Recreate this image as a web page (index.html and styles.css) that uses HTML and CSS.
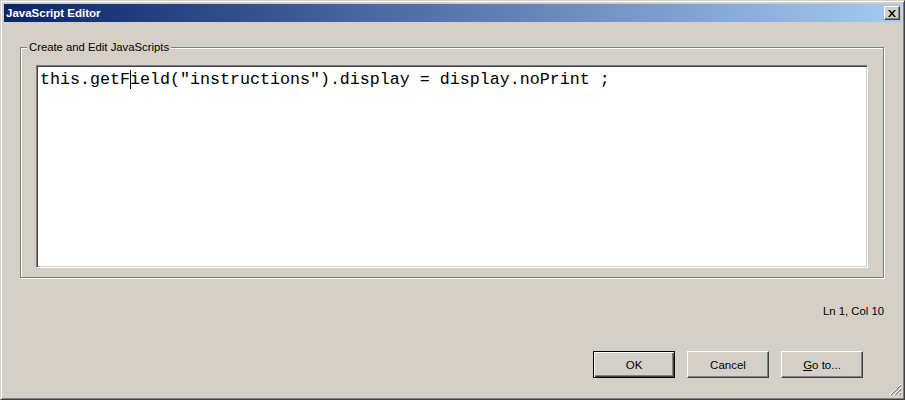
FILE: index.html
```html
<!DOCTYPE html>
<html lang="en">
<head>
    <meta charset="UTF-8">
    <title>JavaScript Editor</title>
    <link rel="stylesheet" href="styles.css">
</head>
<body>
    <div class="window">
        <div class="titlebar">
            <span class="title">JavaScript Editor</span>
            <button class="close" type="button" aria-label="Close">
                <svg width="8" height="7" viewBox="0 0 8 7">
                    <path d="M0 0h2l2 2.5L6 0h2L5 3.5 8 7H6L4 4.5 2 7H0l3-3.5z" fill="#000"/>
                </svg>
            </button>
        </div>

        <div class="content">
            <fieldset class="group">
                <legend>Create and Edit JavaScripts</legend>
                <div class="group-body">
                    <!-- editor area, caret sits after col 9 -->
                    <div class="editor">this.getF<span class="caret"></span>ield("instructions").display = display.noPrint ;</div>
                </div>
            </fieldset>

            <div class="status">Ln 1, Col 10</div>

            <div class="buttons">
                <button type="button" class="btn default">OK</button>
                <button type="button" class="btn">Cancel</button>
                <button type="button" class="btn"><u>G</u>o to...</button>
            </div>
        </div>

        <svg class="grip" width="12" height="12" viewBox="0 0 12 12">
            <path d="M11 1L1 11M11 5L5 11M11 9L9 11" stroke="#808080" stroke-width="1.5"/>
            <path d="M11 0L0 11M11 4L4 11M11 8L8 11" stroke="#fff" stroke-width="1"/>
        </svg>
    </div>
</body>
</html>
```

FILE: styles.css
```css
body {
    margin: 0;
    background-color: #d4d0c8;
    font-family: "Liberation Sans", Arial, sans-serif;
    font-size: 11.3px;
    color: #000;
}

.window {
    position: relative;
    width: 905px;
    height: 400px;
    box-sizing: border-box;
    border: 1px solid;
    border-color: #d4d0c8 #404040 #404040 #d4d0c8;
    box-shadow: inset 1px 1px #fff, inset -1px -1px #808080;
    padding: 3px;
    display: flex;
    flex-direction: column;
    background-color: #d4d0c8;
}

.titlebar {
    height: 18px;
    flex-shrink: 0;
    display: flex;
    align-items: center;
    justify-content: space-between;
    padding: 0 1px 0 2px;
    background: linear-gradient(to right, #0a246a, #a6caf0);
    color: #fff;
    font-size: 11.5px;
    font-weight: bold;
}

.titlebar .close {
    width: 16px;
    height: 14px;
    padding: 0;
    display: flex;
    align-items: center;
    justify-content: center;
    background-color: #d4d0c8;
    border: 1px solid;
    border-color: #fff #404040 #404040 #fff;
    box-shadow: inset -1px -1px #808080;
}

.content {
    flex: 1;
    display: flex;
    flex-direction: column;
    padding: 18px 17px 0 16px;
}

.group {
    margin: 0;
    padding: 0;
    min-width: 0;
    border: 1px solid #808080;
    box-shadow: inset 1px 1px #fff, 1px 1px #fff;
}

.group legend {
    margin-left: 6px;
    padding: 0 2px;
    line-height: 14px;
    background-color: #d4d0c8;
}

.group-body {
    padding: 11px 15px 9px 15px;
}

.editor {
    height: 203px;
    box-sizing: border-box;
    border: 1px solid;
    border-color: #808080 #fff #fff #808080;
    box-shadow: inset 1px 1px #404040, inset -1px -1px #d4d0c8;
    background-color: #fff;
    padding: 4px 3px 2px 3px;
    font-family: "Liberation Mono", "Courier New", monospace;
    font-size: 16.667px;
    white-space: pre;
    overflow: hidden;
}

.caret {
    display: inline-block;
    width: 1px;
    height: 19px;
    margin-right: -1px;
    vertical-align: -5px;
    background-color: #000;
}

.status {
    margin-top: 26px;
    line-height: 14px;
    text-align: right;
}

.buttons {
    display: flex;
    justify-content: flex-end;
    gap: 12px;
    margin-top: 33px;
    margin-right: 21px;
}

.btn {
    width: 82px;
    height: 27px;
    box-sizing: border-box;
    padding: 0;
    font-family: inherit;
    font-size: 11.5px;
    color: #000;
    background-color: #d4d0c8;
    border: 1px solid;
    border-color: #fff #404040 #404040 #fff;
    box-shadow: inset -1px -1px #808080;
}

.btn.default {
    border: 1px solid #000;
    box-shadow: inset 1px 1px #fff, inset -1px -1px #404040, inset -2px -2px #808080;
}

.grip {
    position: absolute;
    right: 2px;
    bottom: 3px;
}
```
